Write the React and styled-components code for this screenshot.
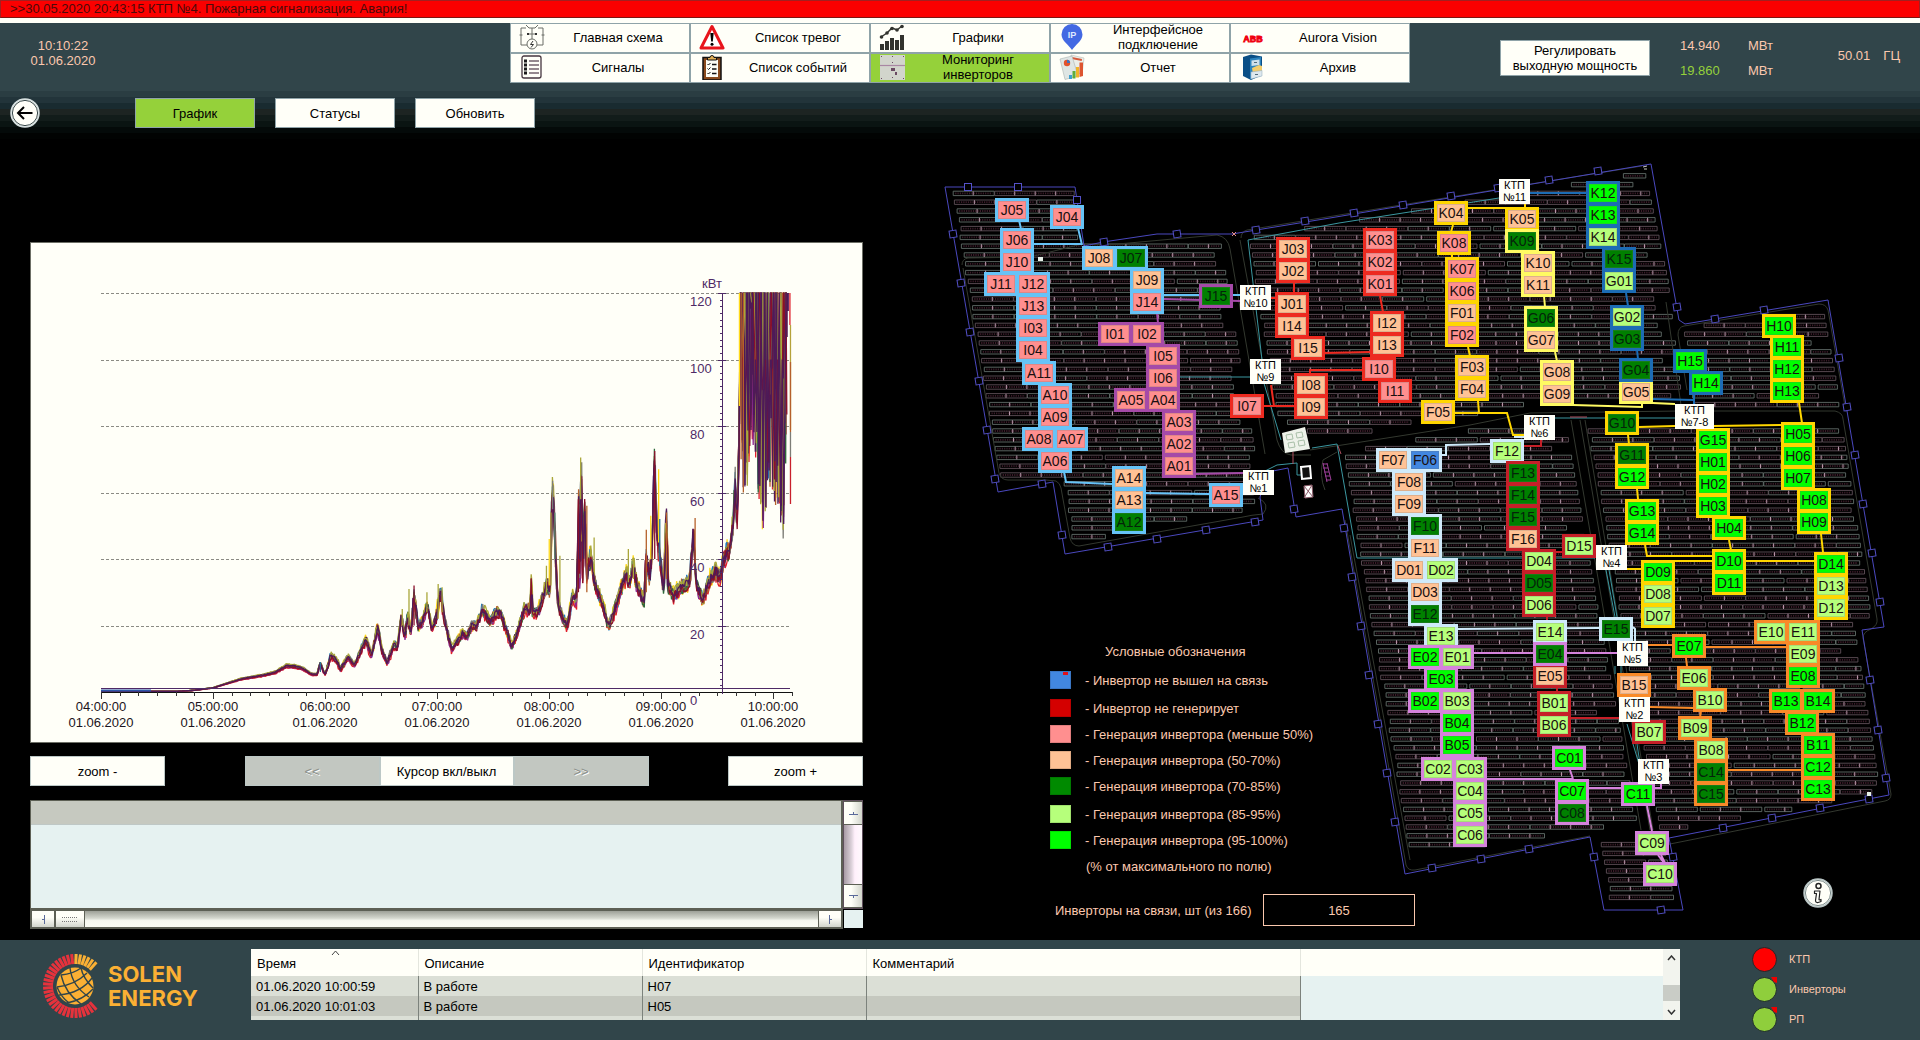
import React from "react";
import styled, { createGlobalStyle, css } from "styled-components";

/* ---------- palette ---------- */
const c = {
  slate: "#31454a",
  paper: "#fffff8",
  peach: "#fbc8ae",
  lime: "#95d13a",
  edge: "#8fa3a8",
  pale: "#e6f2f1",
  grey: "#c6c9c0",
};
const FONT = '"Liberation Sans", Arial, sans-serif';

const levels = {
  P: "#ff8f8f",
  O: "#ffc295",
  D: "#008000",
  L: "#b6ff7b",
  G: "#00ff00",
  U: "#4287e0",
};
const groups = {
  sky: "#66c3f7",
  pur: "#a54aa8",
  red: "#ed2a20",
  gold: "#ffd600",
  yel: "#fffa62",
  blue: "#1c6cb4",
  ice: "#cfeafa",
  crim: "#c61f28",
  orc: "#d583dc",
  ora: "#f98a28",
};

const Global = createGlobalStyle`
  * { box-sizing: border-box; }
  body { margin: 0; background: #000; font-family: ${FONT}; font-size: 13px; line-height: 15px; color: #000; }
  button, input { font: inherit; color: inherit; margin: 0; padding: 0; }
`;

const Page = styled.div`
  min-height: 100vh;
  display: flex;
  flex-direction: column;
  background: #000;
`;

/* ---------- top ---------- */
const Alarm = styled.div`
  height: 18px;
  padding: 0 9px;
  border: 1px solid #a32020;
  border-bottom-color: #7c1512;
  background: #fb0000;
  color: #4c0a0a;
  line-height: 16px;
`;
const Strip = styled.div`
  height: 5px;
  background: ${c.paper};
`;
const Header = styled.header`
  display: grid;
  grid-template-columns: minmax(0, 510fr) 900px minmax(0, 510fr);
  height: 68px;
  background: ${c.slate};
  color: ${c.peach};
`;
const Clock = styled.div`
  width: 66px;
  margin: 15px 0 0 30px;
  text-align: center;
`;
const Nav = styled.nav`
  display: grid;
  grid-template-columns: repeat(5, 1fr);
  grid-auto-rows: 30px;
`;
const buttonSkin = css`
  border: 1px solid ${c.edge};
  background: ${(p) => (p.$on ? c.lime : c.paper)};
  color: #000;
  cursor: pointer;
`;
const NavButton = styled.button`
  ${buttonSkin}
  display: flex;
  align-items: center;
  gap: 2px;
  padding: 0 0 2px 8px;
  svg {
    width: 26px;
    height: 26px;
    flex: none;
  }
  span {
    flex: 1;
    text-align: center;
  }
`;
const Readings = styled.div`
  display: flex;
  padding: 17px 20px 0 90px;
`;
const PowerButton = styled.button`
  ${buttonSkin}
  width: 150px;
  height: 36px;
`;
const Power = styled.div`
  display: grid;
  grid-template-columns: 68px auto;
  grid-auto-rows: 25px;
  margin: -2px 0 0 30px;
`;
const Value = styled.span`
  color: ${(p) => (p.$good ? c.lime : c.peach)};
`;
const Frequency = styled.div`
  display: flex;
  gap: 13px;
  margin: 8px 0 0 auto;
`;
const Toolbar = styled.div`
  display: flex;
  align-items: flex-start;
  gap: 20px;
  height: 51px;
  padding: 7px 10px 0;
  background: linear-gradient(#2a3d42 0 6px, #22343a 6px 12px, #192b30 12px 18px, #1d2422 18px 24px, #121c1a 24px 30px, #0a1412 30px 36px, #040a09 36px 42px, #010302 42px 48px, #000 48px);
`;
const ToolButton = styled.button`
  ${buttonSkin}
  width: 120px;
  height: 30px;
`;
const RoundButton = styled.button`
  display: block;
  width: 30px;
  height: 30px;
  border: 0;
  border-radius: 50%;
  background: none;
  cursor: pointer;
  svg {
    display: block;
  }
`;
const BackSlot = styled.div`
  width: 105px;
`;

/* ---------- main ---------- */
const Main = styled.main`
  flex: 1;
  display: grid;
  grid-template-columns: minmax(0, 1fr) 990px;
  column-gap: 67px;
  padding-left: 30px;
`;
const Left = styled.section`
  display: flex;
  flex-direction: column;
  padding-top: 100px;
`;
const ChartBox = styled.div`
  border: 1px solid #6d6f66;
  background: ${c.paper};
  svg {
    display: block;
    width: 100%;
    height: auto;
  }
`;
const Controls = styled.div`
  display: flex;
  justify-content: space-between;
  margin: 13px 0 14px;
`;
const CursorGroup = styled.div`
  display: flex;
`;
const ControlButton = styled.button`
  width: ${(p) => (p.$narrow ? 134 : 135)}px;
  height: 30px;
  border: 1px solid #bcc8c6;
  background: ${(p) => (p.disabled ? "#c2c7c1" : c.paper)};
  color: ${(p) => (p.disabled ? "#8b8f8a" : "#000")};
  text-shadow: ${(p) => (p.disabled ? "1px 1px 0 #fff" : "none")};
`;
const ListBox = styled.div`
  display: grid;
  grid-template-columns: minmax(0, 1fr) 20px;
  grid-template-rows: 109px 20px;
  height: 129px;
`;
const ListBody = styled.div`
  border: 1px solid #5d6055;
  border-right-width: 2px;
  background: linear-gradient(${c.grey} 0 23px, #bfc8c6 23px 24px, ${c.pale} 24px);
`;
const BarV = styled.div`
  display: flex;
  flex-direction: column;
  justify-content: space-between;
  border: 1px solid #5f4f5c;
  background: linear-gradient(90deg, #a79aa4, #d9cfd7 40%, #fff0fb 60%, #fffafd);
`;
const BarH = styled.div`
  display: flex;
  border: 1px solid #5d6055;
  border-width: 2px 1px;
  background: linear-gradient(#9da097, #d5d8cf 45%, #f6f8f0 60%, #fafcf4);
`;
const ScrollBtn = styled.button`
  display: flex;
  align-items: center;
  justify-content: center;
  width: ${(p) => (p.$h ? "24px" : "100%")};
  height: ${(p) => (p.$h ? "100%" : "24px")};
  border: 1px solid #5d6055;
  border-width: ${(p) => (p.$h ? "0 1px" : "1px 0")};
  background: linear-gradient(${(p) => (p.$h ? "180deg" : "90deg")}, ${c.paper} 40%, #d2d5cc);
`;
const ThumbH = styled(ScrollBtn)`
  width: 30px;
  margin-right: auto;
  border-left-width: 1px;
`;
const Corner = styled.div`
  margin: 1px 0 1px 1px;
  background: ${c.pale};
`;

/* ---------- field map ---------- */
const MapArea = styled.section`
  display: grid;
`;
const Canvas = styled.div`
  grid-area: 1 / 1;
  position: relative;
  width: 970px;
  height: 780px;
  margin-top: 8px;
`;
const Plan = styled.svg`
  display: block;
`;
const Inverter = styled.button`
  position: absolute;
  left: ${(p) => p.$x}px;
  top: ${(p) => p.$y}px;
  width: 34px;
  height: 24px;
  border: 3px solid ${(p) => p.$ring};
  background: ${(p) => p.$fill};
  box-shadow: inset 0 0 0 1px rgba(110, 110, 110, 0.22);
  color: ${(p) => (p.$dim ? "#04240a" : "#1a1010")};
  font-size: 14px;
  line-height: 18px;
  white-space: nowrap;
  display: flex;
  justify-content: center;
`;
const Substation = styled.div`
  position: absolute;
  left: ${(p) => p.$x}px;
  top: ${(p) => p.$y}px;
  width: ${(p) => p.$w}px;
  height: 25px;
  background: ${c.paper};
  font-size: 11px;
  line-height: 12px;
  text-align: center;
  white-space: nowrap;
`;
const InfoSlot = styled.div`
  position: absolute;
  left: 873px;
  top: 728px;
`;
const Legend = styled.div`
  grid-area: 1 / 1;
  align-self: end;
  width: 370px;
  margin: 0 0 14px 120px;
  color: ${c.peach};
  z-index: 1;
`;
const LegendTitle = styled.h2`
  margin: 0 0 12px 55px;
  font-size: 13px;
  font-weight: normal;
  line-height: 15px;
`;
const LegendGroup = styled.ul`
  display: grid;
  gap: 8px;
  margin: 0 0 10px;
  padding: 0;
  list-style: none;
`;
const LegendItem = styled.li`
  display: flex;
  align-items: center;
  gap: 14px;
  height: 18px;
`;
const Swatch = styled.span`
  width: 21px;
  height: 18px;
  background: ${(p) => p.$fill};
  border: 1px solid rgba(0, 0, 0, 0.12);
`;
const Flag = styled.i`
  display: block;
  width: 5px;
  height: 3px;
  margin-left: 12px;
  background: #e0101c;
`;
const LegendNote = styled.p`
  margin: 0 0 20px 36px;
`;
const OnlineRow = styled.div`
  display: flex;
  align-items: center;
  gap: 10px;
  padding-left: 5px;
`;
const OnlineBox = styled.input`
  width: 152px;
  height: 32px;
  border: 1px solid ${c.peach};
  background: #000;
  text-align: center;
`;
const OnlineLabel = styled.label`
  width: 198px;
  white-space: nowrap;
`;

/* ---------- footer ---------- */
const Footer = styled.footer`
  display: flex;
  align-items: flex-start;
  height: 100px;
  padding: 9px 0 0;
  background: ${c.slate};
`;
const Brand = styled.div`
  display: flex;
  align-items: center;
  gap: 8px;
  width: 251px;
  padding: 4px 0 0 41px;
  color: #fbb034;
  font: 700 22px/24px Inter, "Open Sans", sans-serif;
`;
const LogFrame = styled.div`
  flex: 1;
  display: flex;
  height: 71px;
  overflow: hidden;
  background: ${c.pale};
`;
const Log = styled.table`
  flex: 1;
  border-collapse: collapse;
  table-layout: fixed;
  th,
  td {
    padding: 0 5px;
    text-align: left;
    font-weight: normal;
    white-space: nowrap;
  }
  th {
    height: 27px;
    padding: 2px 6px 0;
    background: ${c.paper};
    border-right: 1px solid #e4e6de;
  }
  td {
    height: 20px;
    padding: 1px 5px 0;
    border-right: 1px solid #7c827c;
  }
  tr > :last-child {
    border-right: 0;
  }
  td:last-child {
    background: ${c.pale};
  }
`;
const Row = styled.tr`
  background: ${(p) => (p.$alt ? "#c5c8bf" : "#dbdfd6")};
`;
const SortHead = styled.th`
  position: relative;
  svg {
    position: absolute;
    left: 80px;
    top: 1px;
  }
`;
const LogScroll = styled.div`
  display: flex;
  flex-direction: column;
  justify-content: space-between;
  width: 17px;
  background: #f2f4ee;
`;
const LogScrollBtn = styled.button`
  height: 17px;
  border: 0;
  background: none;
  display: flex;
  align-items: center;
  justify-content: center;
`;
const LogThumb = styled.div`
  height: 16px;
  margin: auto 0 2px;
  background: #c9ccc6;
`;
const Statuses = styled.ul`
  display: grid;
  gap: 5px;
  width: 168px;
  margin: -2px 0 0 72px;
  padding: 0;
  list-style: none;
  color: ${c.peach};
`;
const Status = styled.li`
  display: flex;
  align-items: center;
  gap: 12px;
  height: 25px;
  font-size: 11px;
  svg {
    flex: none;
  }
`;

/* ---------- nav icons ---------- */
const icons = {
  scheme: (
    <svg viewBox="0 0 26 26" fill="none" stroke="#6a6d67" strokeWidth="1">
      <path d="M7 4H2v17h6M19 4h5v17h-6M7 1l3 3h6l3-3M13 4v11M8 10h10M0.500 11h3M22.500 11h3" />
      <circle cx="13" cy="20" r="5" />
      <path d="M14 17l-2.500 3.500h3L12 23.500" stroke="#333" />
      <path d="M8 9h2v2H8zM16 9h2v2h-2z" fill="#333" stroke="none" />
    </svg>
  ),
  alarm: (
    <svg viewBox="0 0 26 26">
      <path d="M13 2.500L24 24H2z" fill="#fff" stroke="#e8141c" strokeWidth="3" strokeLinejoin="round" />
      <path d="M11.300 9h3.400l-.9 8.500h-1.600z" />
      <circle cx="13" cy="20.300" r="1.500" />
    </svg>
  ),
  charts: (
    <svg viewBox="0 0 26 26" fill="#32332e">
      <path d="M1 20h4v6H1zM6 17h4v9H6zM11 14h4v12h-4zM16 16h4v10h-4zM21 11h4v15h-4z" />
      <path d="M2 13l6-4 5-5 5 2 5-4" fill="none" stroke="#32332e" strokeWidth="1.500" />
      <circle cx="2.500" cy="13" r="1.800" /><circle cx="8" cy="9" r="1.800" /><circle cx="13" cy="4.500" r="1.800" /><circle cx="18" cy="6" r="1.800" /><circle cx="23" cy="2.500" r="1.800" />
    </svg>
  ),
  ip: (
    <svg viewBox="0 0 26 26">
      <path d="M13 26C10 21 2.500 17 2.500 10.500a10.500 10.500 0 0 1 21 0C23.500 17 16 21 13 26z" fill="#4369e3" />
      <text x="13" y="14" fontSize="9" fontWeight="bold" fill="#dfe8ff" textAnchor="middle" fontFamily={FONT}>IP</text>
    </svg>
  ),
  abb: (
    <svg viewBox="0 0 26 26">
      <text x="14" y="18" fontSize="9" fontWeight="bold" fill="#f00010" stroke="#f00010" strokeWidth=".8" textAnchor="middle" fontFamily={FONT}>ABB</text>
    </svg>
  ),
  signals: (
    <svg viewBox="0 0 26 26" fill="none" stroke="#46363f">
      <rect x="3" y="2" width="19" height="22" rx="2" strokeWidth="1.300" />
      <path d="M10 7h10M10 11h10M10 15h10M10 19h10" stroke="#2d1526" strokeWidth="1.200" />
      <path d="M5 5.500h3v3H5zM5 9.500h3v3H5zM5 13.500h3v3H5zM5 17.500h3v3H5z" fill="#1b1b1b" stroke="none" />
    </svg>
  ),
  events: (
    <svg viewBox="0 0 26 26">
      <path d="M4 3.500h18V26H4z" fill="#8a4a1c" stroke="#111" strokeWidth="1.500" />
      <path d="M7 6h12v17H7z" fill="#fdfdf5" />
      <path d="M8.500 6V3.500h2.500a2 2 0 0 1 4 0h2.500V6z" fill="#e0ae55" stroke="#111" />
      <path d="M8.500 10l1 1 2-2M8.500 14.500l1 1 2-2M8.500 19l1 1 2-2" fill="none" stroke="#111" />
      <path d="M13 10.500h4.500M13 15h4.500M13 19.500h4.500" stroke="#111" strokeWidth="1.300" />
    </svg>
  ),
  inverter: (
    <svg viewBox="0 0 26 26">
      <path d="M1 1h25v25H1z" fill="#d2d5cc" />
      <path d="M1 11.500h25" stroke="#a987a3" strokeWidth="1.200" />
      <path d="M2 2h1v1H2zM24 2h1v1h-1zM2 24h1v1H2zM24 24h1v1h-1zM13 8h1v1h-1zM12 14h4v3h-4zM16 18h2v3h-2zM13 23h1v1h-1zM13 2h1v1h-1z" fill="#6b4a63" />
    </svg>
  ),
  report: (
    <svg viewBox="0 0 26 26">
      <path d="M12 1l13 3-2 16-12-3z" fill="#eceee8" stroke="#b9bdb8" strokeWidth=".6" />
      <path d="M13 3l10 2-.3 2-10-2z" fill="#d65a3c" />
      <path d="M1 5l12-3 6 20-13 3.500z" fill="#dfe6e4" stroke="#aab2b0" strokeWidth=".6" />
      <circle cx="8" cy="9" r="3.200" fill="#e2532e" /><path d="M8 9V5.800A3.200 3.200 0 0 1 11 9z" fill="#3b74c4" />
      <path d="M10 21h3v4h-3z" fill="#3fa0cf" /><path d="M13.500 17h3v7.500h-3z" fill="#5fae3c" /><path d="M17 13h3v10.500h-3z" fill="#f0b429" /><path d="M20.500 8.500H24V22l-3.500 1z" fill="#dd5530" />
    </svg>
  ),
  archive: (
    <svg viewBox="0 0 26 26">
      <path d="M4 3l8-2.500 11 2V21l-11 5-8-4z" fill="#0a4f86" />
      <path d="M11 4.500L22 3v19l-11 3.500z" fill="#2b83bd" />
      <path d="M12.500 6.500l8-1v5.500l-8 1z" fill="#cfe0ea" />
      <path d="M13 14l7-3 3 1v6l-9 2z" fill="#f3cd6b" />
      <path d="M12 18l11-1.500V22L12 25z" fill="#dde8ee" stroke="#8fa8b8" strokeWidth=".5" />
      <path d="M15 8.500h3M16 20.500h3" stroke="#516b7b" />
    </svg>
  ),
};
const navItems = [
  ["scheme", "Главная схема"],
  ["alarm", "Список тревог"],
  ["charts", "Графики"],
  ["ip", "Интерфейсное подключение"],
  ["abb", "Aurora Vision"],
  ["signals", "Сигналы"],
  ["events", "Список событий"],
  ["inverter", "Мониторинг инверторов", true],
  ["report", "Отчет"],
  ["archive", "Архив"],
];

/* ---------- chart ---------- */
function rng(seed) {
  let s = seed;
  return () => {
    s = (s * 1664525 + 1013904223) % 4294967296;
    return s / 4294967296;
  };
}
// [time-axis position, kW]
const profile = [
  [0, 0.3], [90, 0.2], [136, 0.2], [165, 0.5], [200, 1.3], [220, 2.4], [250, 4], [270, 4.6], [290, 5.2], [310, 6], [330, 8], [345, 7.9], [360, 7.2], [375, 5.5], [385, 5.4], [391, 9], [396, 6.5], [400, 5.3], [410, 11.2], [420, 9.6], [427, 7], [440, 10.6], [452, 8.2], [472, 16.2], [482, 11], [493, 19.6], [501, 12.6], [510, 8.7], [522, 14.6], [528, 13.6],
  [535, 22.5], [542, 17.2], [547, 23.6], [552, 17.6], [558, 29.5], [565, 19.6], [572, 21], [582, 26], [590, 19], [597, 22], [605, 30.4], [615, 19.6], [625, 13], [635, 15.2], [645, 18], [652, 16.6], [660, 20], [670, 20], [680, 25.2], [693, 21.2], [705, 24], [713, 23.6], [725, 17.6], [732, 13.6], [745, 19.6], [755, 25.6], [765, 24.6], [767, 34.2], [769, 23.6], [780, 24.6],
  [795, 32.6], [800, 30.6], [805, 61.6], [809, 48.6], [813, 29.6], [818, 24.6], [825, 21.6], [832, 20.2], [840, 29], [848, 27.6], [852, 57.6], [854, 32.6], [856, 68.6], [859, 32.6], [862, 56.6], [866, 34.6], [873, 41.6], [880, 32.6], [892, 27.6], [905, 19.8], [917, 25.6], [930, 32.6], [938, 35.6], [942, 32.6], [949, 38.6], [955, 32.6], [968, 26.8], [972, 41.6],
  [978, 33.6], [982, 43.6], [987, 70.4], [990, 49.6], [995, 42.6], [1003, 31.2], [1008, 53.6], [1010, 32.6], [1020, 29], [1030, 31], [1050, 33.6], [1056, 48.6], [1060, 33.6], [1072, 27.6], [1082, 32.6], [1095, 36.6], [1103, 34.6], [1110, 40.6], [1122, 43.6], [1128, 53.6], [1130, 64.2], [1134, 50.6], [1138, 82],
];
const PX = (t) => 71 + t / 1.7825;
const PY = (v) => 450 - v * 3.325;
const bottoms = [[1138, 80], [1142, 62], [1150, 58], [1156, 78], [1165, 60], [1176, 48], [1182, 54], [1192, 62], [1200, 55], [1210, 46], [1213, 40], [1218, 70], [1220, 104]];
function lerp(table, t) {
  for (let i = 1; i < table.length; i++) {
    if (t <= table[i][0]) {
      const [a, b] = [table[i - 1], table[i]];
      return a[1] + ((b[1] - a[1]) * (t - a[0])) / (b[0] - a[0]);
    }
  }
  return table[table.length - 1][1];
}
function series(seed, spread, lift, dense) {
  const r = rng(seed);
  let d = "";
  for (let t = 0; t <= 1138; t += 1.8) {
    const base = lerp(profile, t);
    const wild = t > 400 ? 1 : 0.35;
    const dt = t > 400 ? t + (r() - 0.5) * 2 : t;
    const v = lerp(profile, dt) * (1 + (r() - 0.5) * spread * wild) + lift * Math.min(1, base / 12);
    d += `${d ? "L" : "M"}${PX(t).toFixed(1)} ${PY(Math.max(0.1, v)).toFixed(1)}`;
  }
  for (let t = 1140; t <= 1219; t += dense) {
    d += `L${PX(t).toFixed(1)} ${PY(r() > 0.85 ? 100 : 122).toFixed(1)}`;
    const low = lerp(bottoms, t);
    d += `L${PX(t + dense / 2).toFixed(1)} ${PY(low + r() * (r() > 0.5 ? 50 : 14)).toFixed(1)}`;
  }
  d += `L${PX(1221).toFixed(1)} ${PY(122).toFixed(1)}`;
  return d;
}
const curves = [
  ["#ffd91a", series(3, 0.2, 0.1, 6)],
  ["#1e7cc0", series(11, 0.16, 0, 9)],
  ["#e0202c", series(5, 0.14, -1.1, 6)],
  ["#b5602a", series(31, 0.16, 0, 5)],
  ["#8c2a90", series(9, 0.12, -0.8, 9)],
  ["#2f6a3c", series(17, 0.14, -0.2, 7)],
  ["#7d7d76", series(29, 0.14, 0.3, 8)],
  ["#4e1a58", series(61, 0.1, 0, 3.1)],
  ["#aaa73a", series(23, 0.14, 0.5, 8)],
  ["#8a0f2a", series(41, 0.12, -0.7, 11)],
  ["#4e1a58", series(47, 0.08, 0, 5.3)],
];
// short spikes of single inverters over the common curve: [colour, position, from, to]
const spikes = [
  ["#aaa73a", 549, 20, 31], ["#8a0f2a", 558, 20, 32], ["#aaa73a", 537, 20, 25], ["#aaa73a", 581, 24, 30], ["#aaa73a", 601, 22, 32.5], ["#aaa73a", 608, 24, 31.5],
  ["#aaa73a", 794, 30, 38], ["#ffd91a", 799, 32, 46], ["#b8b04a", 802, 32, 54], ["#7d7d76", 805, 55, 63.5], ["#5b8a6a", 809, 40, 54], ["#aaa73a", 818, 26, 41],
  ["#aaa73a", 855, 58, 70.5], ["#8a0f2a", 851, 30, 58], ["#b5602a", 866, 30, 56], ["#aaa73a", 879, 36, 46.5], ["#aaa73a", 940, 33, 43], ["#aaa73a", 949, 34, 40],
  ["#b5602a", 972, 30, 48.8], ["#ffd91a", 980, 40, 53], ["#8a0f2a", 987, 40, 72.5], ["#ffd91a", 994, 45, 67], ["#2a6f96", 996, 38, 52], ["#b5602a", 1008, 34, 54], ["#b5602a", 1059, 36, 52.3], ["#2a6f96", 391, 6, 9],
  ["#ffd91a", 1138, 86, 120], ["#b5602a", 1141, 70, 120], ["#b5602a", 1145, 60, 120],
];
const hours = ["04", "05", "06", "07", "08", "09", "10"];
function Chart() {
  const ticks = [];
  for (let i = 0; i <= 37; i++) ticks.push(71 + i * 18.675);
  const yTicks = [];
  for (let v = 0; v <= 120; v += 2) yTicks.push(v);
  return (
    <svg viewBox="1 1 831 499" fontFamily={FONT} fontSize="13" role="img" aria-label="График мощности инверторов">
      <defs>
        <clipPath id="plot"><rect x="70" y="50.500" width="692" height="401" /></clipPath>
      </defs>
      {[20, 40, 60, 80, 100, 120].map((v) => (
        <path key={v} d={`M71 ${Math.round(PY(v)) + 0.5}H761`} stroke="#8b8b84" strokeDasharray="3 2" />
      ))}
      <g clipPath="url(#plot)" fill="none" strokeWidth="1.300" strokeLinejoin="bevel">
        {curves.map(([s, d], i) => <path key={i} d={d} stroke={s} />)}
        {spikes.map(([s, t, a, b], i) => <path key={i} d={`M${PX(t)} ${PY(a)}V${PY(b)}`} stroke={s} />)}
        <path d={`M${PX(1223)} 51V95M${PX(1225)} 51v18`} stroke="#4e1a58" />
        <path d={`M${PX(1228)} 51v32`} stroke="#e0202c" />
        <path d={`M${PX(1229)} 83v105`} stroke="#b5a23a" />
        <path d={`M${PX(1229)} 120v70`} stroke="#b5602a" />
        <path d={`M${PX(1229)} 190v25`} stroke="#7d7d76" />
        <path d={`M${PX(1229)} 215v47`} stroke="#c8202c" />
      </g>
      {yTicks.map((v) => (
        <path key={v} d={`M${v % 20 ? 690 : 688} ${Math.round(PY(v)) + 0.5}H${v % 20 ? 692 : 696}`} stroke="#4e2a66" />
      ))}
      <path d="M71 448.500h50" stroke="#2d55a8" strokeWidth="2" />
      <path d="M71 446.500H760" stroke="#4e2a66" />
      <path d="M71 450.500H762" stroke="#111" />
      {ticks.map((x, i) => <path key={i} d={`M${Math.round(x) + 0.5} 450v${i % 6 ? 4 : 7}`} stroke="#333" />)}
      <path d="M692.500 51V452" stroke="#4e2a66" />
      <g fill="#4e2a66">
        <text x="672" y="46">кВт</text>
        {[0, 20, 40, 60, 80, 100, 120].map((v) => <text key={v} x="660" y={PY(v) + 13}>{v}</text>)}
      </g>
      <g fill="#1c1420" textAnchor="middle">
        {hours.map((h, i) => (
          <React.Fragment key={h}>
            <text x={71 + i * 112} y="469">{h}:00:00</text>
            <text x={71 + i * 112} y="485">01.06.2020</text>
          </React.Fragment>
        ))}
      </g>
    </svg>
  );
}

/* ---------- plan data ---------- */
// ring colour, then entries of: name level x y
const inverterData = {
  sky: "J05P65,48 J04P120,55 J06P70,78 J10P70,100 J11P54,122 J12P86,122 J13P86,144 I03P86,166 I04P86,188 A11P92,211 A10P108,233 A09P108,255 A08P92,277 A07P124,277 A06P108,299 J08O152,96 J07D184,96 J09O200,118 J14P200,140 A14O182,316 A13O182,338 A12D182,360 A15P279,333",
  pur: "J15D269,134 I01P168,172 I02P200,172 I05P216,194 I06P216,216 A05P184,238 A04P216,238 A03P232,260 A02P232,282 A01P232,304",
  red: "J03O346,87 J02O346,109 J01O345,142 I14O345,164 I15O361,186 I08O364,223 I09O364,245 I07P300,244 K03P433,78 K02P433,100 K01P433,122 I12O440,161 I13O440,183 I10P432,207 I11P448,229",
  gold: "K04O504,51 K05O575,57 K08P507,81 K07P515,107 K06P515,129 F01O515,151 F02P515,173 F03O525,205 F04O525,227 F05O491,250 G10D675,261 G11D685,293 G12G685,315 G13G695,349 G14G695,371 G15G766,278 H01G766,300 H02G766,322 H03G766,344 H04G782,366 D10G782,399 D11G782,421 H10G832,164 H11G840,185 H12G840,207 H13G840,229 H05G851,272 H06G851,294 H07G851,316 H08G867,338 H09G867,360 D14G884,402 D13L884,424 D12L884,446 D09G711,410 D08L711,432 D07L711,454",
  yel: "K09D575,79 K10O591,101 K11O591,123 G06D594,156 G07O594,178 G08O610,210 G09O610,232 G05O689,230",
  blue: "K12G656,31 K13G656,53 K14L656,75 K15D672,97 G01L672,119 G02L680,155 G03D680,177 G04D689,208 H15G743,199 H14G759,221",
  ice: "F07O446,298 F06U478,298 F08O462,320 F09O462,342 F10D478,364 F11O478,386 D01O462,408 D02L494,408 D03O478,430 E12D478,452 E13L494,474 F12L560,289 E14L603,470 E15D669,467",
  crim: "F13D576,311 F14D576,333 F15D576,355 F16O576,377 D04L592,399 D05D592,421 D06L592,443 D15L632,384 E05O603,514 B01L607,541 B06L607,563 B07L702,570",
  orc: "E02G478,495 E01L510,495 E03G494,517 B02G478,539 B03L510,539 B04G510,561 B05G510,583 C02L491,607 C03L523,607 C04L523,629 C05L523,651 C06L523,673 E04D603,492 C01G622,596 C07G625,629 C08D625,651 C11G691,632 C09L705,681 C10L713,712",
  ora: "B15O687,523 E07G742,484 E06L747,516 B10L763,538 B09L748,566 B08L764,588 C14D764,610 C15D764,632 E10L824,470 E11L856,470 E09L856,492 E08G856,514 B13G839,539 B14G871,539 B12G855,561 B11G871,583 C12G871,605 C13G871,627",
};
const inverters = Object.entries(inverterData).flatMap(([ring, text]) =>
  text.split(" ").map((item) => {
    const [, name, level, x, y] = item.match(/^(...)(.)(\d+),(\d+)$/);
    return { name, level, ring, x: +x, y: +y };
  })
);
const substations = [
  ["№11", 569, 29], ["№10", 310, 135], ["№9", 320, 209], ["№1", 313, 320], ["№6", 594, 265], ["№7-8", 745, 254, 39],
  ["№4", 666, 395], ["№5", 687, 491], ["№2", 689, 547], ["№3", 708, 609],
];
const wires = [
  ["sky", "M89 70l2 9M148 78l4 17M104 94h48M234 145h76M134 322l2 10 46 2M216 343l63 1"],
  ["pur", "M227 163l1 10M234 149l76 2M266 324l47-1"],
  ["red", "M364 131v12M341 148h6M395 203l45-1M380 223v-3h52M450 146l3 16M333 256h32M341 235l3 21"],
  ["gold", "M538 58h57v-4M523 75l-2 7M522 104v4M538 197l2 9M548 251l1 12M525 263h52l6 22h11M709 277l36-1M783 276l68-1M698 285l1 9M707 339l1 10M715 395l2 11h65M697 419h14M799 390l2 10M744 411h140M869 253l3 20M891 384l2 18"],
  ["yel", "M614 146l1 11M625 202l2 9M643 255l69 2v-4M723 253l22 1"],
  ["blue", "M600 43h56M696 143l2 13M707 200l1 9M723 249l41 1M764 245v9"],
  ["ice", "M512 305h4v-10l44-1M584 287h10M528 479l141-1M703 477l2 2v12"],
  ["crim", "M594 296h17v-7M626 402h6M617 467v4M627 538v4M641 568h49"],
  ["orc", "M544 503h143M557 629h86M640 620l3 9M659 638h32M725 638h6v-5M717 656l5 25M728 705l6 8M731 705l4 8"],
  ["ora", "M718 495h24M776 497h80M756 508l1 8M720 557l43 1M771 562l-1 5M798 620h73"],
];
const fence = "15,37 145,37 154,96 173,92 227,84 302,84 400,68 721,14 749,170 755,174 898,150 954,477 932,480 959,645 739,688 753,760 674,760 660,687 475,724 412,359 366,367 358,318 338,322 330,347 333,370 135,404 123,332 68,342";
const posts = [
  [38, 37], [88, 37], [147, 50], [174, 92], [247, 84], [326, 80], [375, 71], [23, 84], [31, 133], [40, 182], [49, 231], [57, 280], [65, 329], [112, 334], [132, 385], [178, 397], [227, 389], [276, 380], [325, 372], [364, 359],
  [424, 63], [473, 55], [521, 46], [568, 38], [619, 30], [668, 21], [747, 157], [785, 169], [834, 160], [909, 208], [917, 257], [925, 305], [933, 354], [942, 403], [950, 452],
  [414, 378], [422, 427], [431, 476], [439, 525], [448, 574], [457, 623], [465, 672], [502, 718], [551, 709], [599, 699], [664, 707], [743, 707], [793, 678], [842, 668], [890, 658], [939, 649], [956, 628], [948, 580], [940, 530], [731, 760],
];
const fields = [
  [[21, 41], [144, 41], [148, 92], [215, 94], [291, 94], [329, 326], [68, 326]],
  [[133, 332], [322, 332], [326, 358], [200, 378], [160, 392], [141, 392]],
  [[317, 88], [715, 22], [738, 130], [752, 250], [604, 254], [400, 288], [384, 286], [346, 268]],
  [[752, 178], [893, 158], [912, 262], [762, 262]],
  [[412, 302], [590, 272], [636, 276], [672, 480], [707, 672], [640, 682], [479, 706]],
  [[656, 276], [912, 276], [941, 464], [925, 480], [950, 640], [850, 662], [727, 682]],
  [[669, 688], [733, 688], [745, 756], [679, 756]],
];
function spanAt(poly, y) {
  const xs = [];
  poly.forEach(([x1, y1], i) => {
    const [x2, y2] = poly[(i + 1) % poly.length];
    if ((y1 <= y && y2 > y) || (y2 <= y && y1 > y)) xs.push(x1 + ((y - y1) * (x2 - x1)) / (y2 - y1));
  });
  return xs.length > 1 ? [Math.min(...xs), Math.max(...xs)] : null;
}
// rows of solar tables: outlines in two tones, cells inside, end posts
function buildRows() {
  const r = rng(77);
  const out = { a: "", b: "", cells: "", marks: "" };
  fields.forEach((poly) => {
    const top = Math.min(...poly.map((p) => p[1]));
    const first = 43.4 + Math.ceil((top - 43.4) / 8.8) * 8.8;
    for (let y = first; y < 760; y += 8.8) {
      const s = spanAt(poly, y);
      if (!s) continue;
      let x = s[0] + 1 + r() * 3;
      while (x + 18 < s[1]) {
        const n = 2 + Math.floor(r() * 3);
        const w = Math.min(n * 20.5, s[1] - x);
        const k = r() > 0.5 ? "a" : "b";
        out[k] += `M${x.toFixed(1)} ${(y - 2.2).toFixed(1)}h${w.toFixed(1)}v4.400h${(-w).toFixed(1)}z`;
        out.cells += `M${(x + 2).toFixed(1)} ${y.toFixed(1)}h${(w - 4).toFixed(1)}`;
        for (let m = x + 20; m < x + w - 4; m += 20.5) out.marks += `M${m.toFixed(1)} ${(y - 2).toFixed(1)}v4`;
        x += w + (r() > 0.85 ? 3 : 0.5);
      }
    }
  });
  return out;
}
const rows = buildRows();

function SitePlan() {
  return (
    <Plan width="970" height="780" viewBox="0 0 970 780" fill="none" role="img" aria-label="План солнечной электростанции">
      <path d={rows.a} stroke="#626d69" strokeWidth=".9" />
      <path d={rows.b} stroke="#5f4f58" strokeWidth=".9" />
      <path d={rows.cells} stroke="#3c1c2a" strokeWidth="1.800" strokeDasharray="1.200 1.100" />
      <path d={rows.marks} stroke="#b597a8" />
      <g stroke="#33382f">
        <path d="M32 115q0-6 6-7l62-1 52-13 25 1 110-10q11 2 13 14l35 205M33 118l36 205q2 7 9 7h38l10 1q4 2 5 7l9 50q2 8 9 8l164-29q8-2 20-3 8-10-5-16" />
        <path d="M311 88q0-6 6-8l395-64M310 90l37 200q4 14 14 15h20M380 300l160-25 60-12 150-2h155q8 2 8 8l34 200q1 6-6 10-8 3-8 9l28 156q0 6-6 7l-220 44M641 270l70 410M650 270l70 410M655 270l68 410" />
        <path d="M752 262l-16-110M757 240l-9-55q0-8 6-9l135-22q7 0 9 6l18 102M415 370l61 345q2 6 9 5l175-34M420 385l60 325M395 340q-6-14-2-30l14-8" />
      </g>
      <g stroke="#3b97a0">
        <path d="M569 48l-160 25-91 17 14 120M333 230l18 60M250 227h70M382 298l25-4 20 114h238M625 268h120M676 420l9 47M679 420l8 47M685 516v8M691 516v8M697 574l12 40M333 322l14-7 20-2v12h5M707 594l3 20" />
      </g>
      <polygon points={fence} stroke="#4a48be" />
      <g stroke="#5451c8" fill="#000">
        {posts.map(([x, y], i) => <rect key={i} x={x - 3.5} y={y - 3.5} width="7" height="7" transform={`rotate(${x < 240 && y < 60 ? 0 : -9} ${x} ${y})`} />)}
      </g>
      <g strokeWidth="2">
        {wires.map(([k, d]) => <path key={k} d={d} stroke={groups[k]} />)}
      </g>
      <path d="M640 267h17M408 296l3 8M363 302v12" stroke="#b05060" />
      <path d="M352 283l23-6 5 22-25 4z" fill="#eef2ea" />
      <path d="M356 285l6-1 1 5-6 1zM366 283l6-1 1 5-6 1zM358 293l6-1 1 5-6 1zM368 291l6-1 1 5-6 1z" stroke="#a9bfa8" />
      <path d="M371 317l9-1 1 12-9 1z" fill="#111" stroke="#fff" strokeWidth="2" />
      <path d="M374 336l8-1 1 12-8 1zM374 336l9 11M382 335l-8 13" fill="#fff" stroke="#8a5a68" />
      <path d="M393 314h4M393 318h5M394 322h5M395 326h5M396 330h5M393 313l4 19M397 313l4 17" stroke="#9c3f98" />
      <path d="M108 107h5v4h-5zM937 642h4v4h-4z" fill="#e6efe8" />
      <path d="M302 82l4 4M306 82l-4 4" stroke="#e08a8a" />
      <path d="M713 17l4-1M714 19h3" stroke="#c9c9c0" />
    </Plan>
  );
}

function InfoIcon() {
  return (
    <svg width="30" height="30" viewBox="0 0 30 30">
      <circle cx="15" cy="15" r="14" fill={c.paper} stroke="#b9c6c6" strokeWidth="1.500" />
      <circle cx="15" cy="15" r="12.600" fill="none" stroke="#7d8c8c" />
      <circle cx="15.500" cy="8" r="2.500" fill="none" stroke="#222" strokeWidth="1.500" />
      <path d="M11.500 13h5.500l-1 8.500q0 1 2 0v2q-5.500 2.500-5.500-1l1-7h-2z" fill={c.paper} stroke="#222" strokeWidth="1.200" strokeLinejoin="round" />
    </svg>
  );
}

const legend = [
  [["#4287e0", "- Инвертор не вышел на связь", true]],
  [
    ["#d40000", "- Инвертор не генерирует"],
    ["#ff8f8f", "- Генерация инвертора (меньше 50%)"],
    ["#ffc295", "- Генерация инвертора (50-70%)"],
    ["#008a00", "- Генерация инвертора (70-85%)"],
  ],
  [
    ["#b6ff7b", "- Генерация инвертора (85-95%)"],
    ["#00ff00", "- Генерация инвертора (95-100%)"],
  ],
];

function SunLogo() {
  const rays = [];
  for (let a = -48; a >= -312; a -= 8) {
    const t = (a * Math.PI) / 180;
    const gold = a > -95;
    rays.push(
      <path
        key={a}
        d={`M${34 + 22 * Math.cos(t)} ${33 + 22 * Math.sin(t)}L${34 + 32 * Math.cos(t)} ${33 + 32 * Math.sin(t)}`}
        stroke={gold ? "#fbb034" : "#e6323c"}
        strokeWidth="3"
      />
    );
  }
  return (
    <svg width="59" height="66" viewBox="0 0 59 66" aria-hidden="true">
      {rays}
      <circle cx="34" cy="33" r="18.500" fill="#fbb034" />
      <g fill="none" stroke={c.slate} strokeWidth="1.400">
        <path d="M20 22q12-1 20-7M16 34q18-2 30-14M18 42q22-2 33-17M26 50q16-3 26-14M20 22q4 18 20 29M29 15q2 18 19 29M40 15q2 10 12 20M16 34q4 10 12 16" />
      </g>
    </svg>
  );
}

const logRows = [
  ["01.06.2020 10:00:59", "В работе", "H07"],
  ["01.06.2020 10:01:03", "В работе", "H05"],
  ["", "", ""],
];

export default function App() {
  return (
    <Page>
      <Global />
      <Alarm role="alert">&gt;&gt;30.05.2020 20:43:15 КТП №4. Пожарная сигнализация. Авария!</Alarm>
      <Strip />
      <Header>
        <Clock>
          10:10:22
          <br />
          01.06.2020
        </Clock>
        <Nav>
          {navItems.map(([icon, label, on]) => (
            <NavButton key={icon} type="button" $on={on}>
              {icons[icon]}
              <span>{label}</span>
            </NavButton>
          ))}
        </Nav>
        <Readings>
          <PowerButton type="button">
            Регулировать
            <br />
            выходную мощность
          </PowerButton>
          <Power>
            <Value>14.940</Value>
            <span>МВт</span>
            <Value $good>19.860</Value>
            <span>МВт</span>
          </Power>
          <Frequency>
            <span>50.01</span>
            <span>ГЦ</span>
          </Frequency>
        </Readings>
      </Header>
      <Toolbar>
        <BackSlot>
          <RoundButton type="button" aria-label="Назад">
            <svg width="30" height="30" viewBox="0 0 30 30">
              <circle cx="15" cy="15" r="14" fill={c.paper} stroke="#d5dfdf" strokeWidth="1.500" />
              <circle cx="15" cy="15" r="12.600" fill="none" stroke="#3a4a4c" />
              <path d="M22.500 15H8.500M14 9l-6 6 6 6" fill="none" stroke="#000" strokeWidth="2" />
            </svg>
          </RoundButton>
        </BackSlot>
        <ToolButton type="button" $on>График</ToolButton>
        <ToolButton type="button">Статусы</ToolButton>
        <ToolButton type="button">Обновить</ToolButton>
      </Toolbar>

      <Main>
        <Left>
          <ChartBox>
            <Chart />
          </ChartBox>
          <Controls>
            <ControlButton type="button">zoom -</ControlButton>
            <CursorGroup>
              <ControlButton type="button" disabled>&lt;&lt;</ControlButton>
              <ControlButton type="button" $narrow>Курсор вкл/выкл</ControlButton>
              <ControlButton type="button" disabled>&gt;&gt;</ControlButton>
            </CursorGroup>
            <ControlButton type="button">zoom +</ControlButton>
          </Controls>
          <ListBox>
            <ListBody />
            <BarV>
              <ScrollBtn type="button" aria-label="Вверх"><svg width="9" height="5"><path d="M0 3.500h9M4.500 1v3" stroke="#5b6a9a" /></svg></ScrollBtn>
              <ScrollBtn type="button" aria-label="Вниз"><svg width="9" height="5"><path d="M0 1.500h9M4.500 1v3" stroke="#5b6a9a" /></svg></ScrollBtn>
            </BarV>
            <BarH>
              <ScrollBtn $h type="button" aria-label="Влево"><svg width="5" height="9"><path d="M3.500 0v9M1 4.500h3" stroke="#5b6a9a" /></svg></ScrollBtn>
              <ThumbH $h type="button" aria-label="Прокрутка"><svg width="16" height="7"><path d="M0 1.500h16M0 5.500h16" stroke="#777" strokeDasharray="1 1" /></svg></ThumbH>
              <ScrollBtn $h type="button" aria-label="Вправо"><svg width="5" height="9"><path d="M1.500 0v9M1 4.500h3" stroke="#5b6a9a" /></svg></ScrollBtn>
            </BarH>
            <Corner />
          </ListBox>
        </Left>

        <MapArea>
          <Canvas>
            <SitePlan />
            {inverters.map((n) => (
              <Inverter key={n.name} type="button" $x={n.x} $y={n.y} $ring={groups[n.ring]} $fill={levels[n.level]} $dim={n.level === "D"}>
                {n.name}
              </Inverter>
            ))}
            {substations.map(([name, x, y, w = 31]) => (
              <Substation key={name} $x={x} $y={y} $w={w}>
                КТП
                <br />
                {name}
              </Substation>
            ))}
            <InfoSlot>
              <RoundButton type="button" aria-label="Информация">
                <InfoIcon />
              </RoundButton>
            </InfoSlot>
          </Canvas>
          <Legend>
            <LegendTitle>Условные обозначения</LegendTitle>
            {legend.map((items, i) => (
              <LegendGroup key={i}>
                {items.map(([fill, text, flag]) => (
                  <LegendItem key={text}>
                    <Swatch $fill={fill}>{flag && <Flag />}</Swatch>
                    {text}
                  </LegendItem>
                ))}
              </LegendGroup>
            ))}
            <LegendNote>(% от максимального по полю)</LegendNote>
            <OnlineRow>
              <OnlineLabel htmlFor="online">Инверторы на связи, шт (из 166)</OnlineLabel>
              <OnlineBox id="online" readOnly value="165" />
            </OnlineRow>
          </Legend>
        </MapArea>
      </Main>

      <Footer>
        <Brand>
          <SunLogo />
          <div>
            SOLEN
            <br />
            ENERGY
          </div>
        </Brand>
        <LogFrame>
          <Log>
            <colgroup>
              <col width="167" />
              <col width="224" />
              <col width="224" />
              <col width="434" />
              <col />
            </colgroup>
            <thead>
              <tr>
                <SortHead>
                  Время
                  <svg width="9" height="6"><path d="M1 5l3.500-4L8 5" fill="none" stroke="#444" /></svg>
                </SortHead>
                <th>Описание</th>
                <th>Идентификатор</th>
                <th>Комментарий</th>
                <th aria-hidden="true" />
              </tr>
            </thead>
            <tbody>
              {logRows.map((r, i) => (
                <Row key={i} $alt={i % 2 === 1}>
                  <td>{r[0]}</td>
                  <td>{r[1]}</td>
                  <td>{r[2]}</td>
                  <td />
                  <td />
                </Row>
              ))}
            </tbody>
          </Log>
          <LogScroll>
            <LogScrollBtn type="button" aria-label="Вверх"><svg width="9" height="6"><path d="M1 5l3.500-4L8 5" fill="none" stroke="#333" strokeWidth="1.500" /></svg></LogScrollBtn>
            <LogThumb />
            <LogScrollBtn type="button" aria-label="Вниз"><svg width="9" height="6"><path d="M1 1l3.500 4L8 1" fill="none" stroke="#333" strokeWidth="1.500" /></svg></LogScrollBtn>
          </LogScroll>
        </LogFrame>
        <Statuses>
          {[["#ff0000", "КТП"], ["#8fce3c", "Инверторы", true], ["#8fce3c", "РП", true]].map(([fill, text, flag]) => (
            <Status key={text}>
              <svg width="25" height="25" viewBox="0 0 25 25">
                <circle cx="12.500" cy="12.500" r="12" fill={fill} stroke="#1d2a2c" />
                {flag && <path d="M19 0h6v6l-3-1z" fill="#f00000" />}
              </svg>
              {text}
            </Status>
          ))}
        </Statuses>
      </Footer>
    </Page>
  );
}
